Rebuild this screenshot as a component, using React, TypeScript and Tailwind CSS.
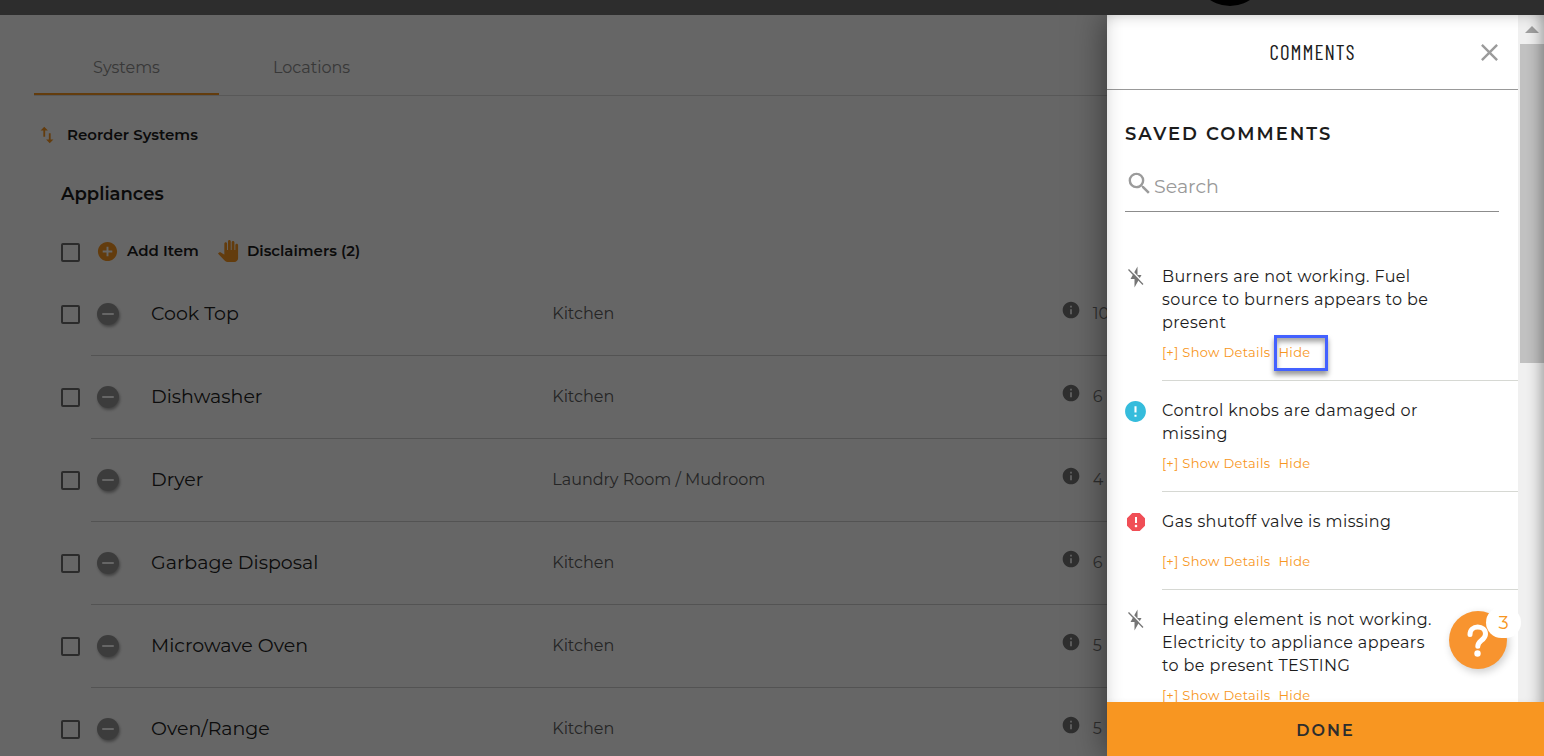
import { useState } from "react";
import { MdAddCircle, MdClose, MdError, MdInfo, MdReport, MdSearch, MdSwapVert } from "react-icons/md";

type Severity = "off" | "notice" | "alert";

const items = [
  { name: "Cook Top", location: "Kitchen", comments: 10 },
  { name: "Dishwasher", location: "Kitchen", comments: 6 },
  { name: "Dryer", location: "Laundry Room / Mudroom", comments: 4 },
  { name: "Garbage Disposal", location: "Kitchen", comments: 6 },
  { name: "Microwave Oven", location: "Kitchen", comments: 5 },
  { name: "Oven/Range", location: "Kitchen", comments: 5 },
];

const savedComments: { severity: Severity; text: string; highlighted?: boolean }[] = [
  { severity: "off", text: "Burners are not working. Fuel source to burners appears to be present", highlighted: true },
  { severity: "notice", text: "Control knobs are damaged or missing" },
  { severity: "alert", text: "Gas shutoff valve is missing" },
  { severity: "off", text: "Heating element is not working. Electricity to appliance appears to be present TESTING" },
];

export default function App() {
  return (
    <div className="relative flex h-screen flex-col overflow-hidden bg-white font-['Montserrat','Inter',sans-serif] text-[#1c1c1c]">
      <header className="relative h-[15px] shrink-0 overflow-hidden bg-[#2d2d2d]">
        <div className="absolute right-[278px] bottom-[9px] size-[72px] rounded-full bg-black" />
      </header>
      <div className="relative min-h-0 flex-1 overflow-hidden">
        <SystemsPage />
        <div className="absolute inset-0 bg-black/60" />
        <CommentsDrawer />
      </div>
    </div>
  );
}

function SystemsPage() {
  return (
    <main className="pl-[34px]">
      <nav className="flex border-b border-[#dcdcdc] pt-6 text-base text-[#8c8c8c]">
        <button className="h-14 w-[185px] border-b-2 border-[#f89621] pt-1">Systems</button>
        <button className="h-14 w-[185px] border-b-2 border-transparent pt-1">Locations</button>
      </nav>

      <button className="mt-[27px] ml-[2px] flex h-6 items-center gap-[9px] text-[15px] font-semibold">
        <MdSwapVert className="size-[22px] text-[#f89621]" />
        Reorder Systems
      </button>

      <section className="pl-[27px]">
        <h2 className="mt-[35px] text-lg leading-6 font-semibold">Appliances</h2>

        <div className="mt-8 flex h-7 items-center text-[15px] font-semibold">
          <Checkbox label="Select all appliances" />
          <button className="-mt-[2px] ml-4 flex items-center gap-2">
            <MdAddCircle className="size-[23px] text-[#f89621]" />
            Add Item
          </button>
          <button className="-mt-[2px] ml-[18px] flex items-center gap-2">
            <HandIcon />
            Disclaimers (2)
          </button>
        </div>

        <ul className="mt-[7px]">
          {items.map((item) => (
            <li key={item.name} className="flex h-[83px] items-center">
              <Checkbox label={`Select ${item.name}`} />
              <div className="ml-[11px] flex h-full flex-1 items-center border-b border-[#d0d0d0] pl-[6px]">
                <button
                  aria-label={`Remove ${item.name}`}
                  className="grid size-[22px] shrink-0 place-items-center rounded-full bg-[#969696] shadow-[1px_2px_3px_rgba(0,0,0,.35)]"
                >
                  <span className="h-[2px] w-3 rounded-full bg-white" />
                </button>
                <div className="ml-8 grid flex-1 grid-cols-[401fr_508fr_483fr] items-center">
                  <span className="text-[19px] text-[#222]">{item.name}</span>
                  <span className="text-base text-[#5c5c5c]">{item.location}</span>
                  <span className="flex items-center gap-3 text-base text-[#777]">
                    <MdInfo className="mb-2 size-5" />
                    {item.comments}
                  </span>
                </div>
              </div>
            </li>
          ))}
        </ul>
      </section>
    </main>
  );
}

function CommentsDrawer() {
  const [query, setQuery] = useState("");
  const visible = savedComments.filter((comment) => comment.text.toLowerCase().includes(query.toLowerCase()));

  return (
    <aside className="absolute inset-y-0 right-0 flex w-[437px] flex-col bg-white shadow-[0_0_32px_rgba(0,0,0,.5)]">
      <div className="relative flex min-h-0 flex-1">
        <div className="min-w-0 flex-1 overflow-hidden">
          <div className="relative flex h-[75px] items-center justify-center border-b border-[#999]">
            <h1 className="font-['Barlow_Condensed','Liberation_Sans_Narrow',sans-serif] text-[21px] tracking-[1px]">COMMENTS</h1>
            <button aria-label="Close" className="absolute right-[14px] text-[#9b9b9b]">
              <MdClose className="size-[29px]" />
            </button>
          </div>

          <div className="pr-[19px] pl-[18px]">
            <h2 className="mt-8 text-lg leading-6 font-semibold tracking-[2px]">SAVED COMMENTS</h2>
            <label className="mt-[23px] mb-[35px] flex h-[43px] border-b border-[#8c8c8c]">
              <MdSearch className="size-[29px] shrink-0 text-[#9b9b9b]" />
              <input
                value={query}
                onChange={(event) => setQuery(event.target.value)}
                placeholder="Search"
                aria-label="Search saved comments"
                className="h-[34px] min-w-0 flex-1 bg-transparent text-[19px] outline-none placeholder:text-[#999]"
              />
            </label>
          </div>

          <ul className="pl-4">
            {visible.map((comment) => (
              <li key={comment.text} className="flex gap-[14px]">
                <div className="grid h-[60px] w-[25px] shrink-0 place-items-center">
                  <SeverityIcon severity={comment.severity} />
                </div>
                <div className="flex-1 border-b border-[#d6d8d3] py-[18px]">
                  <p className="min-h-[33px] max-w-[284px] text-base leading-[23px] tracking-wide">{comment.text}</p>
                  <div className="mt-2 flex gap-2 text-[13px] leading-5 tracking-wide text-[#f89621]">
                    <button>[+] Show Details</button>
                    <button className="relative">
                      Hide
                      {comment.highlighted && (
                        <span className="absolute -top-[7px] -left-1 h-[36px] w-[54px] border-3 border-[#4361ff] shadow-[0_4px_5px_rgba(0,0,0,.4),inset_0_4px_5px_rgba(0,0,0,.35)]" />
                      )}
                    </button>
                  </div>
                </div>
              </li>
            ))}
          </ul>
        </div>

        <div className="w-[26px] shrink-0 bg-[#f0f0f0] pl-[2px]">
          <div className="grid h-[29px] place-items-center">
            <svg viewBox="0 0 14 7" className="w-[14px] fill-[#a0a0a0]">
              <path d="M7 0 14 7H0z" />
            </svg>
          </div>
          <div className="h-[319px] bg-[#c1c1c1]" />
        </div>

        <div className="pointer-events-none absolute inset-0 shadow-[inset_0_10px_14px_-8px_rgba(0,0,0,.16),inset_14px_0_16px_-12px_rgba(0,0,0,.12),inset_-14px_0_14px_-10px_rgba(0,0,0,.3)]" />

        <button aria-label="Help, 3 new" className="absolute right-[37px] bottom-[33px] size-[58px] rounded-full bg-[#f8942f] shadow-[2px_3px_8px_rgba(0,0,0,.2)]">
          <svg viewBox="0 0 58 58" fill="none" className="size-full">
            <path d="M21 23.500c0-4.500 3.300-7.500 7.700-7.500s7.800 2.800 7.800 6.900c0 3-1.700 4.700-4.200 6.600-2.500 1.900-3.500 3.100-3.500 5.800" stroke="#fff" strokeWidth="5" strokeLinecap="round" />
            <circle cx="28.500" cy="42.500" r="3.200" fill="#fff" />
          </svg>
          <span className="absolute -top-[4px] -right-[14px] grid h-[31px] w-[35px] place-items-center rounded-full bg-white text-lg text-[#f89621]">3</span>
        </button>
      </div>

      <button className="h-[54px] shrink-0 bg-[#f89621] pt-1 text-base font-semibold tracking-[2px] text-[#2d2d2d]">DONE</button>
    </aside>
  );
}

function Checkbox({ label }: { label: string }) {
  return <input type="checkbox" aria-label={label} className="size-[19px] shrink-0 appearance-none rounded-[2px] border-2 border-[#6b6b6b] checked:bg-[#f89621]" />;
}

function SeverityIcon({ severity }: { severity: Severity }) {
  if (severity === "notice") return <MdError className="size-[25px] text-[#35bcdc]" />;
  if (severity === "alert") return <MdReport className="size-6 text-[#f04e56]" />;
  return (
    <svg viewBox="0 0 24 24" className="size-6">
      <path d="M13.500 1.500v8.500h4L10.500 22.500v-8.500H6.500z" fill="#757575" />
      <path d="M5.500 3.500 20 18.500" stroke="#fff" strokeWidth="1.600" />
      <path d="M4.500 4.500 19 19.500" stroke="#757575" strokeWidth="1.300" />
    </svg>
  );
}

function HandIcon() {
  return (
    <svg viewBox="0 0 24 24" className="size-[22px] fill-[#f89621]">
      <path d="M23 5.500V20c0 2.200-1.800 4-4 4h-7.300c-1.080 0-2.100-.43-2.850-1.190L1 14.830s1.260-1.230 1.300-1.250c.22-.19.490-.29.790-.29.220 0 .42.060.6.160.04.010 4.310 2.460 4.310 2.460V4c0-.83.670-1.500 1.500-1.500S11 3.170 11 4v7h1V1.500c0-.83.670-1.500 1.500-1.500S15 .67 15 1.500V11h1V2.500c0-.83.670-1.500 1.500-1.500s1.500.67 1.500 1.500V11h1V5.500c0-.83.670-1.500 1.500-1.500s1.500.67 1.500 1.500z" />
    </svg>
  );
}
